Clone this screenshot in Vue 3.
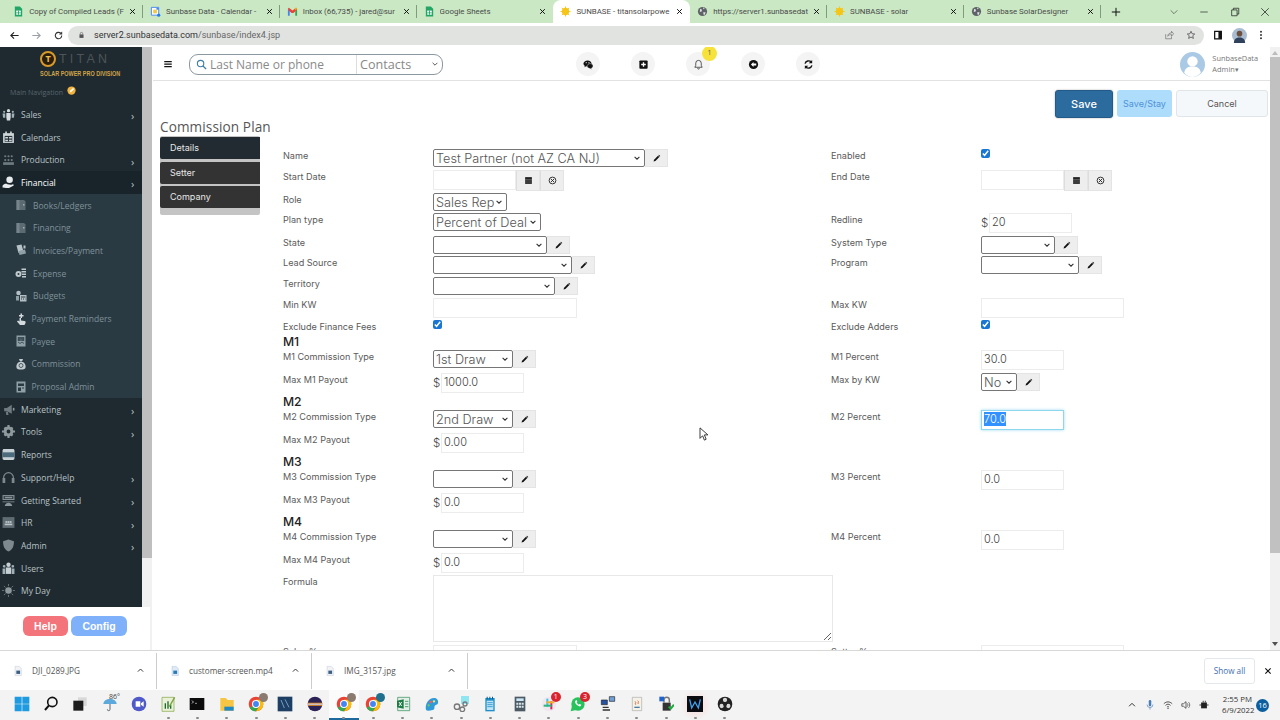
<script setup>
import { h, onMounted } from 'vue'

const c = (x, y, r) => `M${x - r} ${y}a${r} ${r} 0 1 0 ${2 * r} 0a${r} ${r} 0 1 0 ${-2 * r} 0z`

const ICONS = {
  sheet: [['M4 1h11l5 5v17H4z', '#23a566'], ['M7 10h10v9H7z', '#fff'], ['M11 10h2v9h-2zM7 14h10v1.6H7z', '#23a566']],
  cal: [['M3 3h16v17H3z', '#fff', '#4285f4', 2], ['M7 8h8v8H7z', '#f2c744'], ['M14 4h5v4h-5z', '#4285f4'], [c(19, 20, 3.5), '#2a7de1']],
  gmail: [['M2 6v15h4V10z', '#4285f4'], ['M18 10v11h4V6z', '#34a853'], ['M2 6l2-2 8 6 8-6 2 2-2 4-6 5h-4l-6-5z', '#ea4335'], ['M18 4h2l2 2-4 4z', '#fbbc04']],
  sun: [[c(12, 12, 8), '#f5c518'], ['M12 1v4M12 19v4M1 12h4M19 12h4M4 4l3 3M17 17l3 3M20 4l-3 3M7 17l-3 3', 'none', '#f5c518', 2]],
  globe: [[c(12, 12, 10), '#5f6368'], ['M7 6l4 2-1 4-4 1zM14 13l5 1-3 6-2-2zM13 3l4 2-3 2z', '#dfe3e6']],
  back: [['M21 12H4M11 5l-7 7 7 7', 'none', '#222', 2.4]],
  fwd: [['M3 12h17M13 5l7 7-7 7', 'none', '#9aa0a6', 2.4]],
  reload: [['M19 12a7 7 0 1 1-2.2-5', 'none', '#333', 2.4], ['M20 3v7h-7z', '#333']],
  lock: [['M5 10h14v12H5z', '#555'], ['M8 10V7a4 4 0 0 1 8 0v3', 'none', '#555', 2]],
  share: [['M4 10v11h14v-5', 'none', '#777', 1.8], ['M9 15c0-5 4-8 9-8V3l5 6-5 6v-4c-4 0-7 1-9 4z', 'none', '#777', 1.8]],
  star: [['M12 3l2.7 6 6.3.6-4.8 4.2 1.5 6.4L12 17l-5.7 3.2 1.5-6.4L3 9.6 9.3 9z', 'none', '#555', 2]],
  panel: [['M4 3h16v18H4z', 'none', '#111', 3], ['M13 3h7v18h-7z', '#111']],
  kebab: [[c(12, 4, 2.4) + c(12, 12, 2.4) + c(12, 20, 2.4), '#333']],
  avatarPhoto: [[c(12, 12, 12), '#a9bcd0'], [c(12, 9, 4.5), '#6e5040'], ['M3 24c0-7 4-9 9-9s9 2 9 9z', '#30415c']],
  wechat: [['M10 3C5 3 1 6 1 10c0 2 1 4 3 5l-1 3 4-2c1 .3 2 .4 3 .4C15 16.400 19 13 19 10s-4-7-9-7z', '#111'], ['M16 10c-4 0-7 2.500-7 5.500S12 21 16 21l3 2-.6-3c2-1 3.600-2.700 3.600-4.500 0-3-3-5.500-6-5.500z', '#111', '#f4f4f4', 1], [c(7, 8, 1.200) + c(13, 8, 1.200), '#f4f4f4']],
  plusbox: [['M5 3h14a2 2 0 0 1 2 2v14a2 2 0 0 1-2 2H5a2 2 0 0 1-2-2V5a2 2 0 0 1 2-2z', '#111'], ['M10.500 7h3v3.500H17v3h-3.500V17h-3v-3.500H7v-3h3.500z', '#fff']],
  bell: [['M12 3a6 6 0 0 0-6 6v5l-2 4h16l-2-4V9a6 6 0 0 0-6-6zM10 20a2 2 0 0 0 4 0', 'none', '#222', 1.6]],
  circleleft: [[c(12, 12, 10), '#111'], ['M12 6.500L6.500 12l5.500 5.500V14h6v-4h-6z', '#fff']],
  sync: [['M4.500 10A8 8 0 0 1 18 6.500M19.500 14A8 8 0 0 1 6 17.500', 'none', '#111', 3], ['M20 2v7.500h-7.500zM4 22v-7.500h7.500z', '#111']],
  search: [[c(10, 10, 7), 'none', '#3d7ea6', 2.4], ['M15 15l7 7', 'none', '#3d7ea6', 3]],
  user: [[c(12, 12, 12), '#a9c9e4'], [c(12, 9, 5), '#fff'], ['M4 20c1-5 4-6 8-6s7 1 8 6c-2 2.500-5 4-8 4s-6-1.500-8-4z', '#fff']],
  pencil: [['M4 20l1.500-5L16 4.500l3.500 3.500L9 18.500z', '#111'], ['M17 3.500l1.500-1.500 3.500 3.500-1.500 1.500z', '#111']],
  calbtn: [['M3 3h18v18H3z', '#222'], ['M3 9h18v2H3zM3 15h18v1.500H3z', '#8a8a8a']],
  xcircle: [[c(12, 12, 9), 'none', '#222', 2.4], ['M8 8l8 8M16 8l-8 8', 'none', '#222', 2.4]],
  menu: [['M3 5h18v3H3zM3 11h18v3H3zM3 17h18v3H3z', '#111']],
  file: [['M5 1h10l5 5v17H5z', '#f1f3f6', '#b7c0cc', 1], ['M8 11h9v8H8z', '#3c5f84']],
  vid: [['M5 1h10l5 5v17H5z', '#dfeaf6', '#9fb9d2', 1], ['M8 11h9v8H8z', '#2a7ab5']],
  chev: [['M5 15l7-7 7 7', 'none', '#333', 2.6]],

  sales: [[c(12, 5, 3), '#d6dcdf'], ['M8 9h8v8l-1 6H9l-1-6z', '#d6dcdf'], [c(4, 7, 2) + c(20, 7, 2), '#9fb0b7'], ['M1 10h5v8H2zM18 10h5l-1 8h-4z', '#9fb0b7']],
  calendar: [['M2 4h20v18H2z', '#cfd6d8'], ['M5 9h14v11H5z', '#27333a'], ['M6 11h5v3H6zM13 11h5v3h-5zM6 16h5v3H6zM13 16h5v3h-5z', '#cfd6d8'], ['M6 1h3v5H6zM15 1h3v5h-3z', '#cfd6d8']],
  production: [[c(6, 6, 2) + c(12, 6, 2) + c(18, 6, 2) + c(6, 13, 2) + c(12, 13, 2) + c(18, 13, 2), '#6e7a80'], ['M2 17h20v5H2z', '#6e7a80']],
  financial: [[c(14, 7, 6), '#e8ecee'], ['M1 18c3-4 6-4 9-3l6 1c2 0 2 2 0 2h-4l8-3c2 0 2 2 1 3l-8 4H8l-7-1z', '#e8ecee']],
  book: [['M3 2h15l3 3v17H3z', '#5c6b72'], ['M3 2h6v20H3z', '#75858c'], ['M16 10h3v3h-3z', '#a0adb3']],
  invoice: [['M3 3l10-2 4 14-10 3z', '#b8c3c8'], ['M7 14l13-3 2 8-13 3z', '#8fa0a7'], ['M17 3h4v6h-4z', '#b8c3c8']],
  expense: [[c(7, 14, 6), '#c0cacd'], ['M13 3h9v3h-9zM13 8h9v3h-9zM14 13h8v3h-8zM14 18h8v3h-8z', '#c0cacd'], [c(7, 14, 2), '#2a3a42']],
  budget: [[c(7, 6, 4.5), '#b4c0c5'], ['M10 10h13v13H10z', '#b4c0c5'], ['M12 13h9v2h-9zM12 17h2v2h-2zM16 17h2v2h-2zM20 17h1v2h-1z', '#2a3a42'], ['M2 12h6v9H2z', '#8fa0a7']],
  hand: [['M11 1h3v3h3v3h-3v3h-3V7H8V4h3z', '#d2dadd'], ['M9 10h3v5l7 1c2 .3 3 2 2 4l-2 4H10l-6-7 2-2 3 2z', '#d2dadd']],
  payee: [['M3 1h18v22H3z', '#8fa0a7'], ['M6 5h12v2H6zM6 9h5v2H6zM13 9h5v2h-5zM6 14l4 3 4-3 4 3', 'none', '#2a3a42', 1.5]],
  bag: [['M8 2h8l-2 5h-4z', '#c2ccd0'], ['M8 8h8c4 2 6 7 5 11-.5 3-3 4-9 4s-8.500-1-9-4c-1-4 1-9 5-11z', '#c2ccd0'], [c(12, 15, 4), 'none', '#2a3a42', 1.5]],
  doc: [['M3 1h18v22H3z', '#8fa0a7'], ['M6 5h12v5H6zM6 13h6v7H6zM14 13h4v2h-4z', '#2a3a42']],
  megaphone: [['M4 9h5l9-6v17l-9-5H4z', '#6e7a80'], ['M7 16h4l1 6H8z', '#6e7a80'], ['M20 9h3v5h-3z', '#8a979d']],
  gear: [[c(12, 12, 9), '#8e999e'], ['M10 0h4v5h-4zM10 19h4v5h-4zM0 10h5v4H0zM19 10h5v4h-5zM3 6l3-3 3 3-3 3zM15 18l3-3 3 3-3 3zM3 18l3-3 3 3-3 3zM15 6l3-3 3 3-3 3z', '#8e999e'], [c(12, 12, 3.5), '#1f2a30']],
  pdf: [['M4 2h16c2 0 3 1 3 3v14c0 2-1 3-3 3H4c-2 0-3-1-3-3V5c0-2 1-3 3-3z', '#c9d2d6'], ['M1 8h22v9H1z', '#4c6b7c']],
  headset: [['M3 14v-2a9 9 0 0 1 18 0v2', 'none', '#7d898e', 2.2], ['M1 13h5v9H1zM18 13h5v9h-5z', '#7d898e']],
  screen: [['M1 2h22v9H1z', '#8a959a'], ['M3 4h18v5H3z', '#1f2a30'], ['M5 5h14v3H5z', '#8a959a'], ['M1 14h22v1H1zM5 22c1-4 4-6 7-6s6 2 7 6z', '#8a959a']],
  hrbox: [['M1 2h22v20H1z', '#5f6c72'], [c(8, 11, 2) + c(12, 11, 2) + c(16, 11, 2), '#b9c3c7'], ['M5 14h14v3H5z', '#b9c3c7']],
  shield: [['M12 1l10 3c0 9-2 15-10 19C4 19 2 13 2 4z', '#7d898e']],
  users: [[c(12, 5, 4), '#c6d0d4'], ['M7 10h10v12H7z', '#c6d0d4'], [c(4, 8, 2.600) + c(20, 8, 2.600), '#9fb0b7'], ['M1 12h5v10H1zM18 12h5v10h-5z', '#9fb0b7']],
  myday: [[c(12, 12, 6), '#8e999e'], ['M12 0v4M12 20v4M0 12h4M20 12h4M3.500 3.500l3 3M17.500 17.500l3 3M20.500 3.500l-3 3M6.500 17.500l-3 3', 'none', '#6e7a80', 1.6]],

  win: [['M1 1h10.500v10.500H1zM12.500 1H23v10.500H12.500zM1 12.500h10.500V23H1zM12.500 12.500H23V23H12.500z', '#1e9ae0']],
  winsearch: [[c(14, 9, 7), 'none', '#111', 2.4], ['M9 14l-6 7', 'none', '#111', 3]],
  taskview: [['M9 2h13v13H9z', '#d8d8d8'], ['M2 7h15v15H2z', '#1c1c1c']],
  umbrella: [['M2 12a10 8 0 0 1 20 0z', '#5da9dc'], ['M12 12v8a2 2 0 0 1-4 0', 'none', '#5b6770', 1.5]],
  teams: [[c(12, 12, 11), '#5059c9'], ['M7 8h7v8H7zM15 11l4-3v8l-4-3z', '#fff']],
  notechart: [['M3 2h18v21H3z', '#e9f1d9', '#7da33c', 1], ['M7 11h2v8H7zM11 8h2v11h-2zM15 13h2v6h-2z', '#1c6b2e'], ['M14 16L22 2', 'none', '#7da33c', 2]],
  term: [['M1 3h22v18H1z', '#0b0b0b'], ['M4 7l3 2-3 2M9 11h3', 'none', '#ddd', 1]],
  folder: [['M2 3h8l3 3h9v16H2z', '#f6c543'], ['M8 16h14v6H8z', '#1e88c9']],
  chrome: [[c(12, 12, 11), '#ea4335'], ['M12 12L2.500 17.500A11 11 0 0 0 12 23L17.500 13z', '#34a853'], ['M23 12a11 11 0 0 0-2-6.500H12l5.500 9.500-5.500 8A11 11 0 0 0 23 12z', '#fbbc04'], [c(12, 12, 6), '#fff'], [c(12, 12, 4.4), '#4285f4']],
  vs: [['M1 1h22v22H1z', '#1d3f63'], ['M6 6l5 12M12 5l6 12', 'none', '#8cb6d8', 1.2]],
  eclipse: [[c(12, 12, 11), '#2c2255'], ['M1 10h22v1.500H1zM1 13h22v1.500H1z', '#f7941e'], ['M1 11.500h22V13H1z', '#fff']],
  excel: [['M4 2h18v20H4z', '#e2efe6', '#2b8a50', 1], ['M3 7l10-2v14l-10-2z', '#1f7a45'], ['M6 9l4 6M10 9l-4 6', 'none', '#fff', 1.4], ['M15 8h5M15 12h5M15 16h5', 'none', '#2b8a50', 1.2]],
  paint: [['M3 21c-2-9 4-18 12-18 5 0 7 4 6 8-1 3-4 2-5 4s1 5-3 6c-4 1-8 2-10 0z', '#2f9bd8'], [c(10, 9, 2), '#f25f5c'], [c(15, 8, 1.800), '#ffe066'], [c(7, 14, 1.800), '#7bc950']],
  diagram: [['M12 0h12v12H12z', '#8fe6f0'], [c(6, 16, 4) + c(14, 20, 3.500) + c(18, 12, 3), 'none', '#777', 2]],
  notepad: [['M5 3h14v20H5z', '#1f8fc9'], ['M7 7h10v14H7z', '#bfe3f5'], ['M8 10h8M8 13h8M8 16h8', 'none', '#1f8fc9', 1.2], ['M7 1h1.500v4H7zM11 1h1.500v4H11zM15 1h1.500v4H15z', '#0c5c88']],
  calc: [['M4 1h16v22H4z', '#4c5a64'], ['M6.500 3.500h11v4h-11z', '#cbe7f7'], ['M6.500 10h3v3h-3zM10.500 10h3v3h-3zM14.500 10h3v3h-3zM6.500 14.500h3v3h-3zM10.500 14.500h3v3h-3zM14.500 14.500h3v3h-3z', '#d8e3ea']],
  slack: [[c(12, 12, 11), '#efe8ee'], ['M8 4h3v12H8z', '#36c5f0'], ['M14 8h3v12h-3z', '#e01e5a'], ['M4 13h12v3H4z', '#2eb67d'], ['M8 8h12v3H8z', '#ecb22e']],
  whatsapp: [[c(12, 12, 10), '#27c25b'], ['M3 15l-2 8 8-2z', '#27c25b'], ['M8 7c-1 2 0 5 3 7s4 2 5 1l1-2-3-1-1 1-3-3 1-1-1-3z', '#fff']],
  netw: [['M2 6h9v7H2z', '#2453a6', '#222', 1], ['M4 16h9v2H4zM4 20h11v2H4z', '#333'], ['M14 1h8v7h-8z', '#6fa0d8', '#222', 1]],
  java: [['M5 2h14v20H5z', '#f4f1e6', '#aaa', 1], ['M9 8c3 2-1 3 1 5M13 7c3 2-1 3 1 5', 'none', '#d85b2a', 1.3], ['M8 16h8v2H8z', '#4c7ba4']],
  lockgreen: [['M7 10h12v12H7z', '#333'], ['M9 10V6a4 4 0 0 1 8 0v4', 'none', '#777', 2.2], ['M2 1h7v7H2z', '#1e63d0'], ['M16 16l3 3 5-6', 'none', '#1cab3c', 3]],
  waves: [['M0 0h24v24H0z', '#0b0b10'], ['M4 5l3 13 5-9 5 9 3-13', 'none', '#3fa2f0', 2]],
  obs: [[c(12, 12, 11), '#222'], [c(12, 6, 3.200) + c(7, 15, 3.200) + c(17, 15, 3.200), '#d8d8d8'], [c(12, 12, 3), '#222']],
  trayup: [['M5 15l7-7 7 7', 'none', '#222', 2.2]],
  mic: [['M9 3a3 3 0 0 1 6 0v9a3 3 0 0 1-6 0z', '#4a7dbb'], ['M5 11a7 7 0 0 0 14 0M12 18v5', 'none', '#4a7dbb', 1.6]],
  wifi: [['M2 9c6-6 14-6 20 0M6 13c4-4 8-4 12 0M9.500 17c1.500-1.500 3.500-1.500 5 0', 'none', '#222', 1.8], [c(12, 20, 1.500), '#222']],
  speaker: [['M2 9h4l6-5v16l-6-5H2z', 'none', '#222', 1.6], ['M15 8c2 2 2 6 0 8M18 5c4 4 4 10 0 14', 'none', '#222', 1.4]],
  battery: [['M5 6h14v14H5z', '#222'], ['M9 2h2v4H9zM14 2h2v4h-2z', '#222'], ['M1 12h4M19 12h4', 'none', '#222', 2]],
  min: [['M3 12h18', 'none', '#222', 1.6]],
  restore: [['M4 7h13v14H4z', 'none', '#222', 1.8], ['M8 7V3h13v14h-4', 'none', '#222', 1.8]],
  close: [['M3 3l18 18M21 3L3 21', 'none', '#222', 1.8]],
  down: [['M4 8l8 8 8-8', 'none', '#444', 1.6]],
  x: [['M4 4l16 16M20 4L4 20', 'none', '#111', 3.4]],
  plus: [['M12 2v20M2 12h20', 'none', '#111', 2.4]],
  note: [[c(12, 12, 11), '#f2b23e'], ['M7 17l2-5 7-7 3 3-7 7z', '#fff']],
}

const Ico = (props) =>
  h('svg', { viewBox: '0 0 24 24' }, ICONS[props.n].map((p) =>
    h('path', { d: p[0], fill: p[1], stroke: p[2] || 'none', 'stroke-width': p[3] || 0 })))
Ico.props = ['n']

const tabs = [
  { icon: 'sheet', t: 'Copy of Compiled Leads (F' },
  { icon: 'cal', t: 'Sunbase Data - Calendar -' },
  { icon: 'gmail', t: 'Inbox (66,735) - jared@sur' },
  { icon: 'sheet', t: 'Google Sheets' },
  { icon: 'sun', t: 'SUNBASE - titansolarpowe', active: true },
  { icon: 'globe', t: 'https://server1.sunbasedat' },
  { icon: 'sun', t: 'SUNBASE - solar' },
  { icon: 'globe', t: 'Sunbase SolarDesigner' },
]

const nav = [
  { i: 'sales', t: 'Sales', ch: 1 },
  { i: 'calendar', t: 'Calendars' },
  { i: 'production', t: 'Production', ch: 1 },
  { i: 'financial', t: 'Financial', ch: 1, on: 1 },
  { i: 'book', t: 'Books/Ledgers', sub: 1 },
  { i: 'book', t: 'Financing', sub: 1 },
  { i: 'invoice', t: 'Invoices/Payment', sub: 1 },
  { i: 'expense', t: 'Expense', sub: 1 },
  { i: 'budget', t: 'Budgets', sub: 1 },
  { i: 'hand', t: 'Payment Reminders', sub: 1, tight: 1 },
  { i: 'payee', t: 'Payee', sub: 1, tight: 1 },
  { i: 'bag', t: 'Commission', sub: 1, tight: 1 },
  { i: 'doc', t: 'Proposal Admin', sub: 1, tight: 1 },
  { i: 'megaphone', t: 'Marketing', ch: 1 },
  { i: 'gear', t: 'Tools', ch: 1 },
  { i: 'pdf', t: 'Reports' },
  { i: 'headset', t: 'Support/Help', ch: 1 },
  { i: 'screen', t: 'Getting Started', ch: 1 },
  { i: 'hrbox', t: 'HR', ch: 1 },
  { i: 'shield', t: 'Admin', ch: 1 },
  { i: 'users', t: 'Users' },
  { i: 'myday', t: 'My Day' },
  { i: 'doc', t: '' },
]

const sel = (label, w, text, edit) => ({ label, kind: 'sel', w, text, edit })
const inp = (label, w, val, focus) => ({ label, kind: 'inp', w, val, focus })
const mon = (label, val) => ({ label, kind: 'money', val })
const chk = (label) => ({ label, kind: 'chk' })
const dat = (label) => ({ label, kind: 'date' })

const rows = [
  { h: 21, l: sel('Name', 212, 'Test Partner (not AZ CA NJ)', 1), r: chk('Enabled') },
  { h: 23, l: dat('Start Date'), r: dat('End Date') },
  { h: 20, l: sel('Role', 74, 'Sales Rep'), r: {} },
  { h: 23, l: sel('Plan type', 108, 'Percent of Deal'), r: mon('Redline', '20') },
  { h: 20, l: sel('State', 114, '', 1), r: sel('System Type', 74, '', 1) },
  { h: 21, l: sel('Lead Source', 139, '', 1), r: sel('Program', 98, '', 1) },
  { h: 21, l: sel('Territory', 122, '', 1), r: {} },
  { h: 22, l: inp('Min KW', 144, ''), r: inp('Max KW', 143, '') },
  { h: 15, l: chk('Exclude Finance Fees'), r: chk('Exclude Adders') },
  { h: 15, head: 'M1' },
  { h: 23, l: sel('M1 Commission Type', 80, '1st Draw', 1), r: inp('M1 Percent', 83, '30.0') },
  { h: 22, l: mon('Max M1 Payout', '1000.0'), r: sel('Max by KW', 36, 'No', 1) },
  { h: 15, head: 'M2' },
  { h: 23, l: sel('M2 Commission Type', 80, '2nd Draw', 1), r: inp('M2 Percent', 83, '70.0', 1) },
  { h: 22, l: mon('Max M2 Payout', '0.00'), r: {} },
  { h: 15, head: 'M3' },
  { h: 23, l: sel('M3 Commission Type', 80, '', 1), r: inp('M3 Percent', 83, '0.0') },
  { h: 22, l: mon('Max M3 Payout', '0.0'), r: {} },
  { h: 15, head: 'M4' },
  { h: 23, l: sel('M4 Commission Type', 80, '', 1), r: inp('M4 Percent', 83, '0.0') },
  { h: 22, l: mon('Max M4 Payout', '0.0'), r: {} },
  { h: 70, l: { label: 'Formula', kind: 'area' }, r: {} },
  { h: 23, l: inp('Sales %', 144, ''), r: inp('Setter %', 143, '') },
]

const downloads = [
  { i: 'file', t: 'DJI_0289.JPG', w: 157 },
  { i: 'vid', t: 'customer-screen.mp4', w: 155 },
  { i: 'file', t: 'IMG_3157.jpg', w: 156 },
]

const task = [
  { i: 'win' }, { i: 'winsearch' }, { i: 'taskview' }, { i: 'umbrella', temp: 1 }, { i: 'teams' },
  { i: 'notechart', d: 1 }, { i: 'term', d: 1 }, { i: 'folder', d: 1 }, { i: 'chrome', d: 1, av: '#8a7a70' },
  { i: 'vs', d: 1 }, { i: 'eclipse', d: 1 }, { i: 'chrome', d: 1, active: 1, av: '#8a7a70' },
  { i: 'chrome', d: 1, av: '#1f6f8f' }, { i: 'excel', d: 1 }, { i: 'paint', d: 1 }, { i: 'diagram', d: 1 },
  { i: 'notepad', d: 1 }, { i: 'calc', d: 1 }, { i: 'slack', d: 1, badge: '1' }, { i: 'whatsapp', d: 1, badge: '3' },
  { i: 'netw', d: 1 }, { i: 'java', d: 1 }, { i: 'lockgreen', d: 1 }, { i: 'waves', d: 1, pink: 1 }, { i: 'obs', d: 1 },
]

const actions = [
  { i: 'wechat' }, { i: 'plusbox' }, { i: 'bell', badge: '1' }, { i: 'circleleft' }, { i: 'sync' },
]

onMounted(() => {
  const el = document.querySelector('.focus-input')
  if (el) { el.focus(); el.select() }
})
</script>

<template>
  <div class="screen">
    <div class="tabstrip">
      <div v-for="(t, i) in tabs" :key="i" class="tab" :class="{ active: t.active, nosep: t.active || (tabs[i + 1] && tabs[i + 1].active) }">
        <Ico :n="t.icon" class="fav" />
        <span class="tab-text">{{ t.t }}</span>
        <Ico n="x" class="tab-x" />
      </div>
      <Ico n="plus" class="newtab" />
      <div class="winbtns">
        <Ico n="down" class="wb" />
        <Ico n="min" class="wb" />
        <Ico n="restore" class="wb" />
        <Ico n="close" class="wb" />
      </div>
    </div>

    <div class="toolbar">
      <Ico n="back" class="tool" />
      <Ico n="fwd" class="tool" />
      <Ico n="reload" class="tool last-tool" />
      <div class="omni">
        <Ico n="lock" class="omni-lock" />
        <span class="url"><b>server2.sunbasedata.com</b>/sunbase/index4.jsp</span>
        <Ico n="share" class="omni-r" />
        <Ico n="star" class="omni-r" />
      </div>
      <Ico n="panel" class="tool-r" />
      <Ico n="avatarPhoto" class="tool-av" />
      <Ico n="kebab" class="tool-r" />
    </div>

    <div class="appbody">
      <aside class="side">
        <div class="side-main">
          <div class="logo">
            <div class="logo-top">
              <span class="logo-coin">T</span>
              <span class="logo-titan">TITAN</span>
            </div>
            <div class="logo-sub">SOLAR POWER PRO DIVISION</div>
          </div>
          <div class="nav-head">Main Navigation <Ico n="note" class="nav-note" /></div>
          <div v-for="(n, ni) in nav" :key="ni" class="nav-row" :class="{ sub: n.sub, on: n.on, tight: n.tight }">
            <Ico :n="n.i" class="nav-ico" />
            <span class="nav-text">{{ n.t }}</span>
            <span v-if="n.ch" class="nav-ch">›</span>
          </div>
        </div>
        <div class="side-scroll"><div class="side-thumb"></div></div>
        <div class="side-foot">
          <button class="foot-btn help">Help</button>
          <button class="foot-btn config">Config</button>
        </div>
      </aside>

      <main class="content">
        <div class="topbar">
          <Ico n="menu" class="burger" />
          <div class="searchbox">
            <Ico n="search" class="search-ico" />
            <input class="search-input" placeholder="Last Name or phone" />
            <select class="search-sel"><option>Contacts</option></select>
          </div>
          <div class="top-actions">
            <div v-for="a in actions" :key="a.i" class="round">
              <Ico :n="a.i" class="round-ico" />
              <span v-if="a.badge" class="round-badge">{{ a.badge }}</span>
            </div>
          </div>
          <div class="profile">
            <Ico n="user" class="profile-ico" />
            <div class="profile-text">
              <div>SunbaseData</div>
              <div>Admin▾</div>
            </div>
          </div>
        </div>

        <div class="btnrow">
          <button class="btn save">Save</button>
          <button class="btn stay">Save/Stay</button>
          <button class="btn cancel">Cancel</button>
        </div>

        <h1 class="title">Commission Plan</h1>

        <div class="plan">
          <div class="sidetabs">
            <div class="stab first">Details</div>
            <div class="stab">Setter</div>
            <div class="stab">Company</div>
          </div>
          <div class="form">
            <div v-for="(r, ri) in rows" :key="ri" class="frow" :style="{ height: r.h + 'px' }">
              <div v-if="r.head" class="fhead">{{ r.head }}</div>
              <template v-else>
                <template v-for="(f, fi) in [r.l, r.r]" :key="fi">
                  <div class="flabel">{{ f.label }}</div>
                  <div class="fctl">
                    <template v-if="f.kind === 'sel'">
                      <select class="fsel" :style="{ width: f.w + 'px' }"><option>{{ f.text }}</option></select>
                      <span v-if="f.edit" class="fbtn"><Ico n="pencil" class="fbtn-ico" /></span>
                    </template>
                    <input v-else-if="f.kind === 'inp'" class="finp" :class="{ 'focus-input': f.focus }" :style="{ width: f.w + 'px' }" :value="f.val" />
                    <template v-else-if="f.kind === 'money'">
                      <span class="dollar">$</span>
                      <input class="finp money" :value="f.val" />
                    </template>
                    <input v-else-if="f.kind === 'chk'" class="fchk" type="checkbox" checked />
                    <template v-else-if="f.kind === 'date'">
                      <input class="finp date" />
                      <span class="fbtn tall"><Ico n="calbtn" class="fbtn-ico" /></span>
                      <span class="fbtn tall"><Ico n="xcircle" class="fbtn-ico" /></span>
                    </template>
                    <textarea v-else-if="f.kind === 'area'" class="farea"></textarea>
                  </div>
                </template>
              </template>
            </div>
          </div>
        </div>

        <svg class="cursor" viewBox="0 0 10 16"><path d="M1 1v12l3-3 2 5 2-1-2-5h4z" fill="#fff" stroke="#222" stroke-width="1" /></svg>
      </main>

      <div class="vscroll">
        <span class="va up"></span>
        <div class="vthumb"></div>
        <span class="va dn"></span>
      </div>
    </div>

    <div class="downloads">
      <div v-for="d in downloads" :key="d.t" class="dl" :style="{ width: d.w + 'px' }">
        <Ico :n="d.i" class="dl-ico" />
        <span class="dl-text">{{ d.t }}</span>
        <Ico n="chev" class="dl-ch" />
      </div>
      <button class="showall">Show all</button>
      <Ico n="x" class="dl-x" />
    </div>

    <div class="taskbar">
      <div v-for="(t, i) in task" :key="i" class="tk" :class="{ active: t.active, pink: t.pink }">
        <Ico :n="t.i" class="tk-ico" />
        <span v-if="t.temp" class="tk-temp">86°</span>
        <span v-if="t.av" class="tk-av" :style="{ background: t.av }"></span>
        <span v-if="t.badge" class="tk-badge">{{ t.badge }}</span>
        <span v-if="t.d" class="tk-dot"></span>
      </div>
      <div class="tray">
        <Ico n="trayup" class="tray-ico" />
        <Ico n="mic" class="tray-ico" />
        <Ico n="wifi" class="tray-ico" />
        <Ico n="speaker" class="tray-ico" />
        <Ico n="battery" class="tray-ico" />
        <div class="clock"><div>2:55 PM</div><div>6/9/2022</div></div>
        <span class="notif">16</span>
      </div>
    </div>
  </div>
</template>

<style>
html, body { margin: 0; overflow: hidden; background: #fff; }
</style>

<style scoped>
.screen { width: 1280px; height: 720px; display: flex; flex-direction: column; overflow: hidden; font-family: "Open Sans", sans-serif; color: #444; }
svg { display: block; flex: none; }

/* tabs */
.tabstrip { height: 23px; background: #c9e8c3; display: flex; align-items: center; padding-left: 6.2px; flex: none; }
.tab { width: 136.8px; height: 23px; box-sizing: border-box; display: flex; align-items: center; padding: 0 7px; position: relative; flex: none; }
.tab::after { content: ""; position: absolute; right: 0; top: 5px; height: 13px; width: 1px; background: #7f9c7c; }
.tab.nosep::after { display: none; }
.tab.active { background: #fff; border-radius: 8px 8px 0 0; }
.fav { width: 11px; height: 11px; margin-right: 5px; }
.tab-text { flex: 1; min-width: 0; white-space: nowrap; overflow: hidden; font: 7.900px "Roboto", sans-serif; color: #4a4a4a; }
.tab-x { width: 7px; height: 7px; margin-left: 4px; }
.newtab { width: 10px; height: 10px; margin-left: 10px; }
.winbtns { margin-left: auto; display: flex; gap: 20.500px; padding-right: 10px; }
.wb { width: 10px; height: 10px; }

/* toolbar */
.toolbar { height: 24px; display: flex; align-items: center; background: #fff; padding: 0 0 0 9px; flex: none; }
.tool { width: 11px; height: 11px; margin-right: 11px; }
.last-tool { margin-right: 4px; }
.omni { width: 1136px; height: 19px; border-radius: 10px; background: #e1e3e1; display: flex; align-items: center; padding: 0 8px 0 10px; box-sizing: border-box; flex: none; }
.omni-lock { width: 7px; height: 8px; margin-right: 9px; }
.url { flex: 1; font: 9px "Roboto", sans-serif; color: #666; }
.url b { font-weight: 400; color: #333; }
.omni-r { width: 10px; height: 10px; margin-left: 12px; }
.tool-r { width: 10px; height: 10px; margin-left: 9px; }
.tool-av { width: 15px; height: 15px; margin-left: 9px; }

/* body */
.appbody { height: 603px; display: flex; flex: none; background: #fff; }
.side { width: 153px; display: flex; position: relative; flex: none; overflow: hidden; }
.side-main { width: 142px; background: #1f2a30; overflow: hidden; }
.side-scroll { width: 10px; background: #f1f1f1; }
.side-thumb { height: 511px; background: #bfbfbf; }
.logo { height: 33px; display: flex; flex-direction: column; align-items: flex-start; padding: 4px 0 0 40px; box-sizing: border-box; background: #1e2a2f; }
.logo-top { display: flex; align-items: center; gap: 3px; height: 16px; }
.logo-coin { width: 16px; height: 16px; border-radius: 50%; border: 2px solid #d99a2c; box-sizing: border-box; font-size: 9px; line-height: 12px; text-align: center; color: #f0c050; font-weight: 700; background: #2a1d0c; }
.logo-titan { color: #4f5458; font-size: 12.500px; letter-spacing: 3.200px; font-family: "Liberation Sans", sans-serif; }
.logo-sub { font-family: "Liberation Sans", sans-serif; color: #d0a34a; font-size: 7.600px; line-height: 9px; font-weight: 700; margin-top: 2px; white-space: nowrap; transform: scaleX(.72); transform-origin: left center; }
.nav-head { height: 23px; display: flex; align-items: center; padding: 1px 0 0 10px; box-sizing: border-box; font-size: 7px; color: #57666d; gap: 2px; white-space: pre; }
.nav-note { width: 9px; height: 9px; margin-top: -3px; }
.nav-row { height: 22.700px; display: flex; align-items: center; padding-left: 2px; position: relative; font-size: 8.500px; color: #b7c2c6; box-sizing: border-box; }
.nav-row.on { background: #19242a; color: #fff; }
.nav-row.sub { background: #2a3a42; padding-left: 15px; font-size: 8.500px; color: #7f929a; }
.nav-ico { width: 13px; height: 13px; margin-right: 6px; }
.nav-row.sub .nav-ico { width: 12px; height: 12px; margin-right: 6px; }
.nav-row.tight .nav-ico { margin-right: 4.500px; }
.nav-ch { position: absolute; left: 131px; font-size: 11px; color: #b7c2c6; line-height: 1; margin-top: 3px; }
.side-foot { position: absolute; left: 0; bottom: 0; width: 150px; height: 43px; background: #fff; display: flex; justify-content: flex-start; gap: 3px; padding: 9px 0 0 23px; box-sizing: border-box; }
.foot-btn { height: 20px; border: 0; border-radius: 6px; color: #fff; font: 700 10.500px "Liberation Sans", sans-serif; padding: 0; }
.help { width: 45px; background: #f3747b; }
.config { width: 56px; background: #7fb1fb; }

.content { flex: 1; min-width: 0; overflow: hidden; position: relative; background: #fff; }
.topbar { height: 34px; box-sizing: border-box; border-bottom: 1px solid #e2e2e2; display: flex; align-items: center; padding: 1px 0 0 10px; }
.burger { width: 10px; height: 10px; }
.searchbox { margin-left: 16px; width: 254px; height: 21px; border: 1px solid #8c98a0; border-radius: 9px; box-sizing: border-box; display: flex; align-items: center; padding-left: 6px; }
.search-ico { width: 11px; height: 11px; margin-right: 3px; }
.search-input { width: 146px; border: 0; border-right: 1px solid #ddd; outline: 0; height: 19px; padding: 0; font: 12px "Open Sans", sans-serif; background: transparent; }
.search-input::placeholder { color: #8a8a8a; opacity: 1; }
.search-sel { flex: 1; min-width: 0; border: 0; outline: 0; height: 19px; font: 12.600px "Open Sans", sans-serif; color: #888; padding: 0 0 0 3px; appearance: none; background: url("data:image/svg+xml,%3Csvg xmlns='http://www.w3.org/2000/svg' viewBox='0 0 10 6'%3E%3Cpath d='M1 1l4 4 4-4' fill='none' stroke='%23555' stroke-width='1.6'/%3E%3C/svg%3E") no-repeat right 4px center / 6px 4px transparent; }
.top-actions { display: flex; margin-left: 133px; gap: 31px; }
.round { width: 24px; height: 24px; border-radius: 50%; background: #f4f4f4; display: flex; align-items: center; justify-content: center; position: relative; }
.round-ico { width: 11px; height: 11px; }
.round-badge { position: absolute; right: -7px; top: -6px; width: 15px; height: 15px; border-radius: 50%; background: #f7e23c; color: #555; font-size: 7px; line-height: 13px; text-align: center; }
.profile { display: flex; margin-left: auto; align-items: center; padding-right: 12px; gap: 7px; }
.profile-ico { width: 25px; height: 25px; }
.profile-text { font-size: 7.400px; color: #777; line-height: 11px; }

.btnrow { display: flex; justify-content: flex-end; gap: 4px; padding: 9px 2px 0 0; height: 39px; box-sizing: border-box; align-items: flex-start; }
.btn { border-radius: 3px; font-family: "Inter", sans-serif; padding: 0; }
.save { width: 58px; height: 28px; background: #2c6b9d; border: 1px solid #235a87; color: #fff; font-size: 11px; font-weight: 500; box-shadow: 0 0 2px #0005; }
.stay { width: 55px; height: 27px; background: #aedcfb; border: 0; color: #4f93d9; font-size: 9px; }
.cancel { width: 92px; height: 27px; background: #f5f8fa; border: 1px solid #e1e5e8; color: #555; font-size: 9px; }

.title { margin: 0 0 0 7px; height: 16px; font-size: 13.600px; line-height: 14px; font-weight: 400; color: #565656; letter-spacing: .1px; }
.plan { display: flex; margin-left: 7px; align-items: flex-start; }
.sidetabs { width: 100px; background: #c4c4c4; padding: 1px 0 7px; flex: none; box-sizing: border-box; border-radius: 2px; }
.stab { height: 22px; padding-left: 10px; background: #333; color: #e6e6e6; font: 400 9px/22px "Inter", sans-serif; margin-bottom: 2.500px; border-radius: 2px 0 0 2px; }
.stab.first { background: #212b31; }
.stab:last-child { margin-bottom: 0; }
.form { margin: 13px 0 0 23px; width: 980px; }
.frow { display: grid; grid-template-columns: 150px 398px 150px 1fr; align-items: start; }
.fhead { grid-column: 1 / -1; font: 500 12.200px/13px "Inter", sans-serif; color: #222; }
.flabel { font: 400 9.100px/12px "Inter", sans-serif; color: #5a5a5a; white-space: nowrap; padding-top: .5px; }
.fctl { display: flex; align-items: flex-start; min-width: 0; }
.fsel { height: 18px; box-sizing: border-box; border: 1px solid #767676; border-radius: 2px; padding: 0 0 0 2px; font: 300 12.700px "Inter", sans-serif; color: #555; flex: none; appearance: none; background: url("data:image/svg+xml,%3Csvg xmlns='http://www.w3.org/2000/svg' viewBox='0 0 10 6'%3E%3Cpath d='M1 1l4 4 4-4' fill='none' stroke='%23333' stroke-width='1.8'/%3E%3C/svg%3E") no-repeat right 4px center / 6px 4px #fff; }
.fbtn { width: 23px; height: 18px; background: #eee; border: 1px solid #e4e4e4; border-left: 0; box-sizing: border-box; display: flex; align-items: center; justify-content: center; }
.fbtn.tall { width: 24px; height: 21px; border-left: 1px solid #ddd; }
.fbtn-ico { width: 9px; height: 9px; }
.finp { height: 20px; box-sizing: border-box; border: 1px solid #ececec; padding: 0 2px 2px; font: 300 11px "Inter", sans-serif; color: #444; outline: 0; background: #fff; border-radius: 0; }
.finp.date { width: 83px; }
.finp.money { width: 83px; }
.dollar { width: 8px; font: 300 11.500px/20px "Inter", sans-serif; color: #444; }
.fchk { width: 9px; height: 9px; margin: 0; accent-color: #1976d2; }
.farea { width: 400px; height: 67px; box-sizing: border-box; border: 1px solid #e8e8e8; border-radius: 0; margin: 0; flex: none; }
.focus-input { border: 1px solid #8fd6ee; box-shadow: 0 0 3px #9fdcf0; }
.focus-input::selection { background: #3390ff; color: #fff; }
.cursor { position: absolute; left: 546px; top: 380px; width: 9px; height: 14px; }

.vscroll { width: 10px; background: #f1f1f1; flex: none; display: flex; flex-direction: column; align-items: center; }
.vthumb { width: 10px; height: 496px; margin-top: 1px; background: #c1c1c1; }
.va { width: 0; height: 0; border-left: 3px solid transparent; border-right: 3px solid transparent; }
.va.up { border-bottom: 4px solid #bbb; margin-top: 4px; margin-bottom: 1px; }
.va.dn { border-top: 4px solid #505050; margin-top: auto; margin-bottom: 4px; }

/* downloads */
.downloads { height: 40px; flex: none; border-top: 1px solid #d8d8d8; box-sizing: border-box; background: #fff; display: flex; align-items: center; }
.dl { display: flex; align-items: center; height: 36px; box-sizing: border-box; border-right: 1px solid #ccc; padding: 0 11px 0 13px; }
.dl-ico { width: 10px; height: 12px; margin-right: 9px; }
.dl-text { flex: 1; font-size: 8.200px; color: #555; white-space: nowrap; }
.dl-ch { width: 9px; height: 9px; }
.showall { margin-left: auto; width: 51px; height: 26px; background: #fff; border: 1px solid #e4e8ec; border-radius: 3px; color: #3f6fb0; font: 8.200px "Open Sans", sans-serif; padding: 0; }
.dl-x { width: 8px; height: 8px; margin: 0 8px 0 9px; }

/* taskbar */
.taskbar { height: 30px; flex: none; background: #f3f3f3; display: flex; align-items: center; padding-left: 7px; }
.tk { width: 29.300px; height: 30px; flex: none; display: flex; align-items: center; justify-content: center; position: relative; box-sizing: border-box; padding-bottom: 2px; }
.tk.active { background: #fbfbfb; box-shadow: inset 0 -2px 0 #1e6a9c; }
.tk.pink { background: radial-gradient(circle, #f9d8d8, #f3f3f3 75%); }
.tk-ico { width: 16px; height: 16px; }
.tk-temp { position: absolute; left: 14px; top: 2px; font-size: 7px; color: #444; }
.tk-av { position: absolute; right: 3px; top: 3px; width: 9px; height: 9px; border-radius: 50%; }
.tk-badge { position: absolute; right: 3px; top: 2px; width: 10px; height: 10px; border-radius: 50%; background: #d9232e; color: #fff; font-size: 7px; line-height: 10px; text-align: center; }
.tk-dot { position: absolute; bottom: 1px; left: calc(50% - 1.500px); width: 3px; height: 2px; background: #8a8a8a; border-radius: 1px; }
.tray { margin-left: auto; display: flex; align-items: center; padding-right: 11px; }
.tray-ico { width: 10px; height: 10px; margin-right: 8px; }
.clock { font-size: 7.800px; line-height: 11px; color: #333; text-align: right; margin-left: 5px; width: 30px; white-space: nowrap; }
.notif { width: 13px; height: 13px; border-radius: 50%; background: #0b5f9e; color: #fff; font-size: 7.500px; line-height: 13px; text-align: center; margin-left: 4px; }
</style>
